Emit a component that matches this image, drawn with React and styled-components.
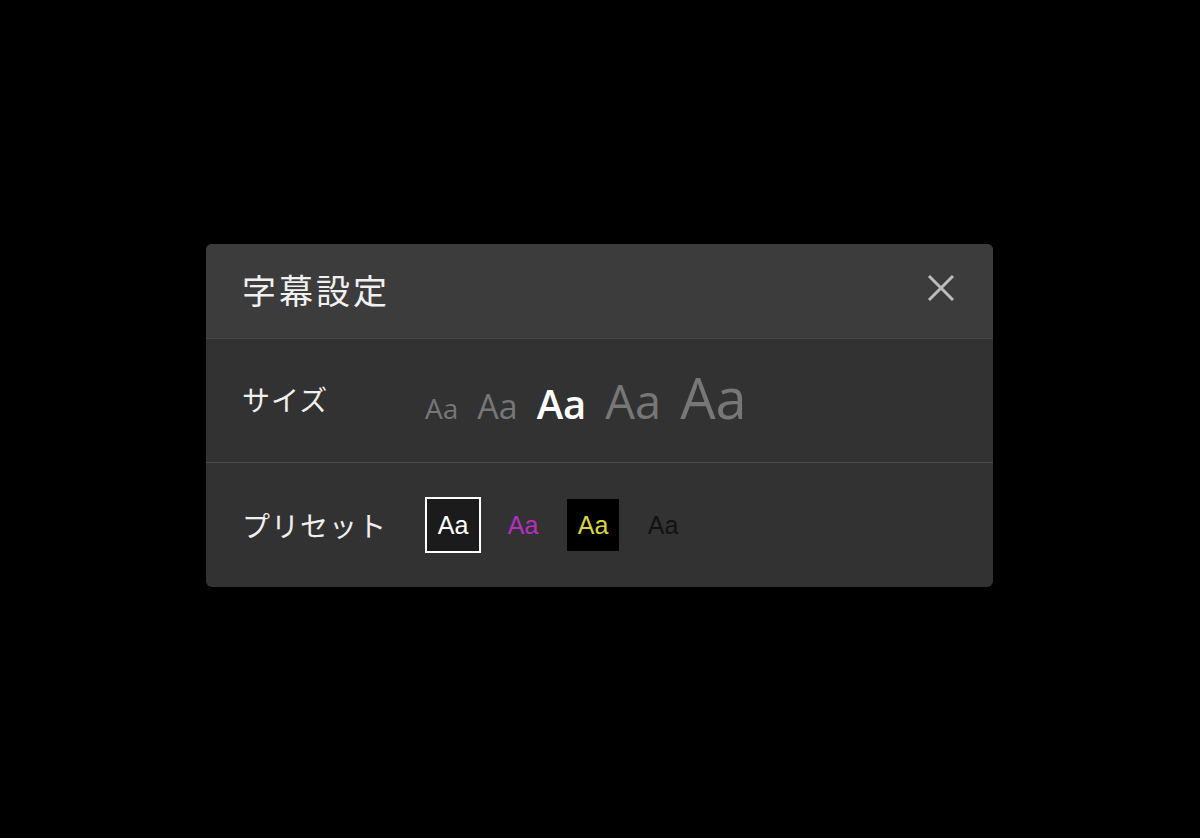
import React from 'react'
import styled, { createGlobalStyle } from 'styled-components'

const Global = createGlobalStyle`
  html, body {
    margin: 0;
    padding: 0;
    background: #000;
  }
  * { box-sizing: border-box; }
`

const Page = styled.div`
  width: 100%;
  height: 838px;
  display: flex;
  align-items: center;
  justify-content: center;
  padding: 0 1px 7px 0;
  font-family: "Noto Sans CJK JP", "Noto Sans", sans-serif;
`

const Panel = styled.div`
  width: 787px;
  background: #323232;
  border-radius: 6px;
  overflow: hidden;
`

const Header = styled.div`
  height: 95px;
  background: #3c3c3c;
  border-bottom: 1px solid #454545;
  display: flex;
  align-items: center;
  justify-content: space-between;
  padding: 0 38px 4px 36px;
`

const Title = styled.h1`
  margin: 0;
  font-size: 34px;
  font-weight: 400;
  letter-spacing: 3px;
  color: #f0f0f0;
`

const Close = styled.button`
  width: 28px;
  height: 28px;
  padding: 0;
  border: 0;
  background: none;
  cursor: pointer;
  display: flex;
  margin-top: -2px;
`

const Row = styled.div`
  height: ${p => p.$h}px;
  display: flex;
  align-items: center;
  padding-left: 36px;
  border-bottom: ${p => (p.$last ? 'none' : '1px solid #4a4a4a')};
`

const Label = styled.div`
  width: 183px;
  flex-shrink: 0;
  font-size: 28px;
  letter-spacing: 1px;
  color: #f0f0f0;
  margin-top: ${p => p.$dy || 0}px;
`

const Sizes = styled.div`
  display: flex;
  align-items: baseline;
  gap: 19px;
  margin-top: -8px;
`

const SizeOpt = styled.span`
  font-family: "Open Sans", "Noto Sans", sans-serif;
  font-size: ${p => p.$size}px;
  font-weight: ${p => (p.$active ? 600 : 400)};
  color: ${p => (p.$active ? '#ffffff' : '#777777')};
  line-height: 1;
  cursor: pointer;
`

const Presets = styled.div`
  display: flex;
  gap: 14px;
`

const Preset = styled.div`
  width: 56px;
  height: 56px;
  display: flex;
  align-items: center;
  justify-content: center;
  border: 2px solid ${p => (p.$active ? '#ffffff' : 'transparent')};
  background: ${p => p.$bg || 'transparent'};
  background-clip: padding-box;
  color: ${p => p.$fg};
  font-family: "Liberation Sans", Arial, sans-serif;
  font-size: 25px;
  cursor: pointer;
`

const sizes = [28, 34, 40, 47, 56]

const presets = [
  { fg: '#ffffff', bg: '#1b1b1b', active: true },
  { fg: '#b52fc2' },
  { fg: '#d9d53c', bg: '#000000' },
  { fg: '#111111' },
]

export default function App() {
  return (
    <>
      <Global />
      <Page>
        <Panel>
          <Header>
            <Title>字幕設定</Title>
            <Close aria-label="close">
              <svg width="28" height="28" viewBox="0 0 28 28">
                <path d="M2 2 L26 26 M26 2 L2 26" stroke="#bdbdbd" strokeWidth="3" fill="none" />
              </svg>
            </Close>
          </Header>

          <Row $h={124}>
            <Label $dy={-4}>サイズ</Label>
            <Sizes>
              {sizes.map((s, i) => (
                <SizeOpt key={s} $size={s} $active={i === 2}>Aa</SizeOpt>
              ))}
            </Sizes>
          </Row>

          <Row $h={124} $last>
            <Label>プリセット</Label>
            <Presets>
              {presets.map((p, i) => (
                <Preset key={i} $fg={p.fg} $bg={p.bg} $active={p.active}>Aa</Preset>
              ))}
            </Presets>
          </Row>
        </Panel>
      </Page>
    </>
  )
}
